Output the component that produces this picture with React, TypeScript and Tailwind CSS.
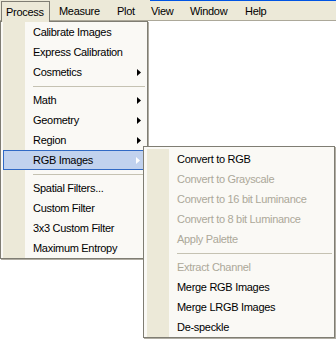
import React from "react";

type Entry = { label?: string; sub?: boolean; disabled?: boolean; active?: boolean; sep?: boolean };

const mainItems: Entry[] = [
  { label: "Calibrate Images" },
  { label: "Express Calibration" },
  { label: "Cosmetics", sub: true },
  { sep: true },
  { label: "Math", sub: true },
  { label: "Geometry", sub: true },
  { label: "Region", sub: true },
  { label: "RGB Images", sub: true, active: true },
  { sep: true },
  { label: "Spatial Filters..." },
  { label: "Custom Filter" },
  { label: "3x3 Custom Filter" },
  { label: "Maximum Entropy" },
];

const rgbItems: Entry[] = [
  { label: "Convert to RGB" },
  { label: "Convert to Grayscale", disabled: true },
  { label: "Convert to 16 bit Luminance", disabled: true },
  { label: "Convert to 8 bit Luminance", disabled: true },
  { label: "Apply Palette", disabled: true },
  { sep: true },
  { label: "Extract Channel", disabled: true },
  { label: "Merge RGB Images" },
  { label: "Merge LRGB Images" },
  { label: "De-speckle" },
];

const bar = [
  { label: "Process", w: "w-[49px]", pl: "pl-[4px]" },
  { label: "Measure", w: "w-[58px]", pl: "pl-[9px]" },
  { label: "Plot", w: "w-[34px]", pl: "pl-[9px]" },
  { label: "View", w: "w-[39px]", pl: "pl-[9px]" },
  { label: "Window", w: "w-[55px]", pl: "pl-[9px]" },
  { label: "Help", w: "w-[50px]", pl: "pl-[9px]" },
];

function Arrow({ light }: { light?: boolean }) {
  return (
    <svg width="4" height="7" viewBox="0 0 4 7" className="mr-[4px]">
      <path d="M0 0 L4 3.5 L0 7 Z" fill={light ? "#ffffff" : "#000000"} />
    </svg>
  );
}

function MenuList({ items }: { items: Entry[] }) {
  return (
    <div className="flex flex-col">
      {items.map((it, i) =>
        it.sep ? (
          <div key={i} className="flex h-[8px]">
            <div className="w-[22px] bg-[#ece9d8]" />
            <div className="flex-1 flex items-center pl-[8px]">
              <div className="h-px w-full bg-[#c5c2b2]" />
            </div>
          </div>
        ) : it.active ? (
          <div key={i} className="flex items-center h-[20px] bg-[#c1d2ee] border border-[#316ac5]">
            <div className="w-[29px]" />
            <span className="flex-1 text-black">{it.label}</span>
            {it.sub && <Arrow light />}
          </div>
        ) : (
          <div key={i} className="flex h-[20px]">
            <div className="w-[22px] bg-[#ece9d8]" />
            <div className="flex-1 flex items-center pl-[8px]">
              <span className={"flex-1 " + (it.disabled ? "text-[#aca899]" : "text-black")}>{it.label}</span>
              {it.sub && <Arrow />}
            </div>
          </div>
        )
      )}
    </div>
  );
}

export default function App() {
  return (
    <div
      className="relative w-[336px] h-[340px] bg-white overflow-hidden text-[11px] tracking-[-0.3px] leading-none"
      style={{ fontFamily: '"Liberation Sans", Arial, sans-serif' }}
    >
      <div className="flex h-px">
        <div className="w-[150px] bg-[#ece9d8]" />
        <div className="flex-1 bg-[#0054e3]" />
      </div>
      <div className="flex h-[20px] bg-[#ece9d8] border-b border-[#aca899] pl-px">
        {bar.map((b, i) => (
          <div
            key={i}
            className={
              b.w + " " + b.pl + " flex items-center h-[20px] text-black " +
              (i === 0 ? "border-t border-l border-r border-[#7f7d73] bg-[#ece9d8] h-[21px] relative z-20" : "")
            }
          >
            {b.label}
          </div>
        ))}
      </div>

      {/* Process dropdown */}
      <div className="absolute left-0 top-[21px] w-[148px] z-10 bg-[#faf9f5] border border-[#7f7d73] px-[2px] shadow-[1px_1px_0_#b0ada3]">
        <MenuList items={mainItems} />
      </div>

      {/* RGB Images submenu */}
      <div className="absolute left-[143px] top-[146px] w-[192px] z-30 bg-[#faf9f5] border border-[#7f7d73] pl-[3px] pr-[2px] pt-[2px] shadow-[1px_1px_0_#b0ada3]">
        <MenuList items={rgbItems} />
      </div>
    </div>
  );
}
